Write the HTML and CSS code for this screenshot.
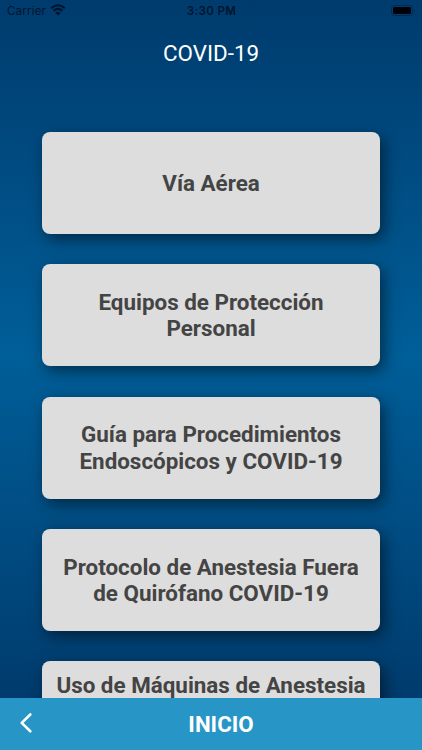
FILE: index.html
```html
<!DOCTYPE html>
<html lang="es">
<head>
<meta charset="utf-8">
<title>COVID-19</title>
<link rel="stylesheet" href="styles.css">
</head>
<body>
<div class="screen">
  <header class="status">
    <div class="carrier"><span>Carrier</span>
      <svg class="wifi" viewBox="0 0 16 12" width="16" height="12">
        <path d="M1.1 4.3Q8 -1.8 14.9 4.3M3.5 6.8Q8 3 12.5 6.8" fill="none" stroke="currentColor" stroke-width="2.1"/>
        <path d="M5.3 8.7Q8 6.6 10.7 8.7L8 11.4Z" fill="currentColor"/>
      </svg>
    </div>
    <div class="time">3:30 PM</div>
    <div class="power">
      <svg class="battery" viewBox="0 0 25 11" width="25" height="11">
        <rect x=".5" y=".5" width="21" height="10" rx="3" fill="none" stroke="#002a50"/>
        <rect x="2" y="2" width="18" height="7" rx="1.5" fill="#000207"/>
        <path d="M23 3.7Q24.5 5.5 23 7.3Z" fill="#002a50"/>
      </svg>
    </div>
  </header>
  <h1 class="title">COVID-19</h1>
  <main class="list">
    <div class="card"><span class="label">Vía Aérea</span></div>
    <div class="card"><span class="label">Equipos de Protección<br>Personal</span></div>
    <div class="card"><span class="label">Guía para Procedimientos<br>Endoscópicos y COVID-19</span></div>
    <div class="card"><span class="label">Protocolo de Anestesia Fuera<br>de Quirófano COVID-19</span></div>
    <div class="card card-tall"><span class="label">Uso de Máquinas de Anestesia</span></div>
  </main>
  <footer class="bar">
    <svg class="back" viewBox="0 0 14 22" width="14" height="22">
      <path d="M11.3 2.5L2.7 10.9L11.3 19.3" fill="none" stroke="currentColor" stroke-width="2.6" stroke-linecap="round" stroke-linejoin="round"/>
    </svg>
    <span class="home">INICIO</span>
  </footer>
</div>
</body>
</html>
```
FILE: styles.css
```css
* { box-sizing: border-box; }
body { margin: 0; font-family: Roboto, "Liberation Sans", sans-serif; }
.screen {
  width: 422px; height: 750px; overflow: hidden;
  display: flex; flex-direction: column;
  background: linear-gradient(#003b6d 0, #005e98 355px, #003b6d 700px);
}
.status {
  height: 22px; flex: none;
  display: grid; grid-template-columns: 1fr auto 1fr; align-items: center;
  padding: 0 6px 0 7px;
  font-family: Inter, sans-serif; font-size: 11.5px; color: #00152e;
}
.carrier { display: flex; align-items: center; gap: 4px; letter-spacing: .2px; }
.wifi { margin-top: -2px; }
.time { font-weight: 600; letter-spacing: .35px; }
.power { display: flex; justify-content: flex-end; }
.battery { margin-top: -1px; }
.title {
  flex: none; margin: 17px 0 0; text-align: center;
  font-size: 22.4px; font-weight: 400; line-height: 28px; color: #fff;
}
.list {
  flex: 1; min-height: 0; overflow: hidden;
  display: flex; flex-direction: column; gap: 30.4px;
  padding: 64.8px 42.3px 0;
}
.card {
  flex: none; height: 102px; border-radius: 8px;
  background: #ddd; box-shadow: 4px 5px 15px rgba(0, 0, 0, .5);
  display: flex; align-items: center; justify-content: center;
}
.card-tall { align-items: flex-start; padding-top: 11px; }
.label {
  text-align: center; white-space: nowrap;
  font-size: 22.4px; font-weight: 700; line-height: 26.3px; color: #444;
}
.bar {
  flex: none; height: 52px; padding: 0 18px;
  display: grid; grid-template-columns: 20px 1fr; align-items: center;
  background: #2796c6; color: #fff;
}
.back { margin: -2px 0 0 1px; }
.home { text-align: center; font-size: 22.3px; font-weight: 700; }
```
